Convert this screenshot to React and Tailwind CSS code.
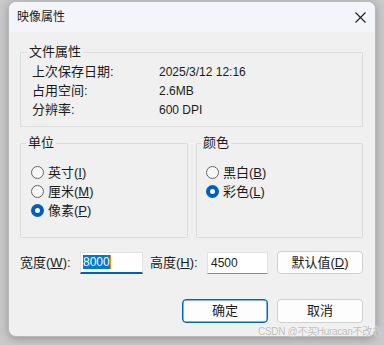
import React from "react";

const cjk = "font-['Liberation_Sans','Noto_Sans_CJK_SC',sans-serif]";

function Radio({ checked, label, hotkey }) {
  return (
    <div className="flex h-[19px] items-center">
      {checked ? (
        <span className="flex h-[13px] w-[13px] items-center justify-center rounded-full bg-[#005fb8]">
          <span className="h-[5px] w-[5px] rounded-full bg-white"></span>
        </span>
      ) : (
        <span className="h-[13px] w-[13px] rounded-full border border-[#646464] bg-[#f7f7f7]"></span>
      )}
      <span className="ml-[4px] text-[13px] text-[#1b1b1b]">
        {label}(<u>{hotkey}</u>)
      </span>
    </div>
  );
}

function Group({ title, className, children }) {
  return (
    <fieldset className={`rounded-[1px] border border-[#dcdcdc] ${className}`}>
      <legend className="ml-[-5px] px-[2px] text-[13px] leading-[16px] text-[#1b1b1b]">
        {title}
      </legend>
      {children}
    </fieldset>
  );
}

export default function App() {
  // lignes du groupe "文件属性"
  const infos = [
    ["上次保存日期:", "2025/3/12 12:16"],
    ["占用空间:", "2.6MB"],
    ["分辨率:", "600 DPI"],
  ];

  return (
    <div className={`relative h-[345px] w-[384px] overflow-hidden bg-[#c9c9c9] px-2 pt-px ${cjk}`}>
      <div className="flex h-[336px] flex-col overflow-hidden rounded-lg border border-[#b9b9b9] bg-[#f0f0f0] shadow-[0_2px_8px_rgba(0,0,0,0.25)]">
        {/* barre de titre */}
        <div className="flex h-[30px] shrink-0 items-center justify-between bg-[#f3f5fa] pl-[8px] pr-[9px]">
          <span className="text-[12px] text-[#1b1b1b]">映像属性</span>
          <svg width="11" height="11" viewBox="0 0 11 11">
            <path d="M0.5 0.5 L10.5 10.5 M10.5 0.5 L0.5 10.5" stroke="#1b1b1b" strokeWidth="1.1" />
          </svg>
        </div>

        <div className="flex flex-col pl-[11px] pr-[12px]">
          <Group title="文件属性" className="mt-[12px] h-[83px] pl-[11px] pt-[2px]">
            {infos.map(([k, v]) => (
              <div key={k} className="flex h-[19px] items-center text-[#1b1b1b]">
                <span className="w-[127px] text-[13px]">{k}</span>
                <span className="text-[12px]">{v}</span>
              </div>
            ))}
          </Group>

          <div className="mt-[8px] flex gap-2">
            <Group title="单位" className="h-[103px] w-[168px] pl-[10px] pt-[12px]">
              <Radio label="英寸" hotkey="I" />
              <Radio label="厘米" hotkey="M" />
              <Radio checked label="像素" hotkey="P" />
            </Group>
            <Group title="颜色" className="h-[103px] w-[167px] pl-[9px] pt-[12px]">
              <Radio label="黑白" hotkey="B" />
              <Radio checked label="彩色" hotkey="L" />
            </Group>
          </div>

          <div className="mt-[13px] flex items-center text-[#1b1b1b]">
            <span className="w-[60px] text-[13px]">
              宽度(<u>W</u>):
            </span>
            <div className="flex h-[22px] w-[63px] items-center border border-b-2 border-[#e3e3e3] border-b-[#005fb8] bg-white pl-[2px]">
              <span className="bg-[#0078d7] text-[12px] leading-[14px] text-white">8000</span>
              <span className="h-[14px] w-px bg-[#ff8a00]"></span>
            </div>
            <span className="ml-[7px] w-[57px] text-[13px]">
              高度(<u>H</u>):
            </span>
            <div className="flex h-[22px] w-[61px] items-center border border-[#e3e3e3] border-b-[#8a8a8a] bg-white pl-[3px] text-[12px]">
              4500
            </div>
            <button className="ml-[9px] flex h-[23px] w-[86px] items-center justify-center rounded-[4px] border border-[#d0d0d0] bg-[#fdfdfd] text-[13px]">
              默认值(<u>D</u>)
            </button>
          </div>

          <div className="mt-[25px] flex justify-end gap-[9px] text-[13px] text-[#1b1b1b]">
            <button className="flex h-[24px] w-[86px] items-center justify-center rounded-[4px] border border-[#0067c0] bg-[#fdfdfd] shadow-[inset_0_0_0_0.5px_#0067c0]">
              确定
            </button>
            <button className="flex h-[24px] w-[86px] items-center justify-center rounded-[4px] border border-[#d0d0d0] bg-[#fdfdfd]">
              取消
            </button>
          </div>
        </div>
      </div>

      {/* filigrane */}
      <span className="absolute left-[258px] top-[325px] text-[10px] leading-[14px] tracking-[-0.3px] text-[#bdbdbd] [text-shadow:0_0_1px_#ffffff]">
        CSDN @不买Huracan不改名
      </span>
    </div>
  );
}
